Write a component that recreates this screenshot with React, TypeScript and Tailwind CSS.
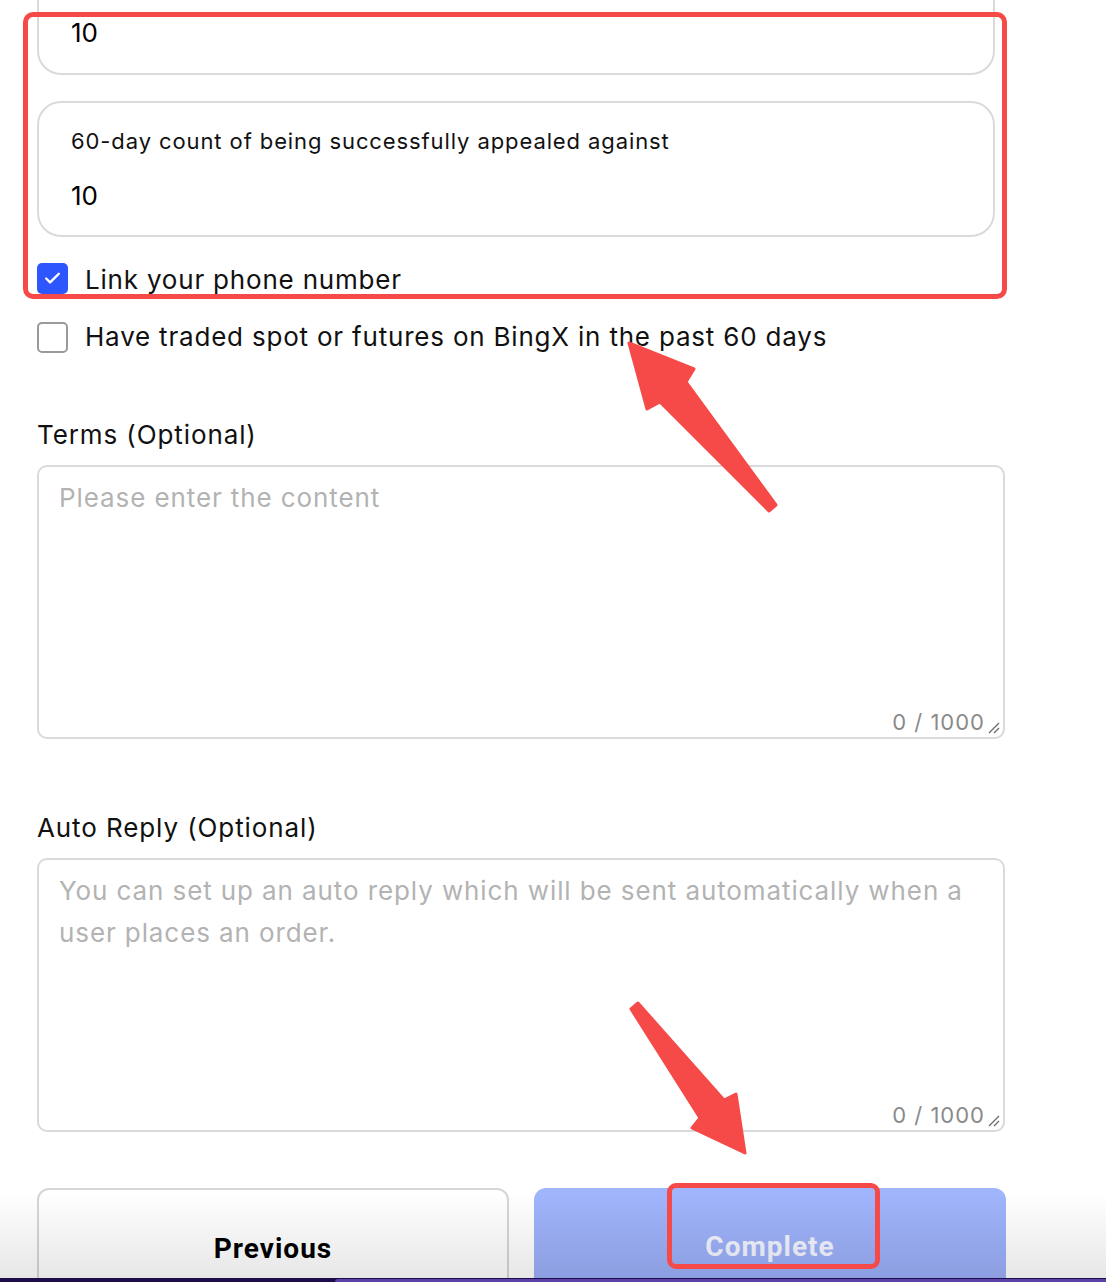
import React from 'react';
import { Check } from 'lucide-react';

const font = { fontFamily: 'Inter, "Noto Sans", sans-serif' };

const ResizeGrip = () => (
  <svg className="absolute right-[3px] bottom-[3px]" width="14" height="14" viewBox="0 0 14 14">
    <path d="M3 13 L13 3 M8 13 L13 8" stroke="#6b6b6b" strokeWidth="1.3" />
  </svg>
);

const CountBox = ({ label, value, className }: { label?: string; value: string; className?: string }) => (
  <div className={`w-[958px] h-[136px] rounded-[24px] border-2 border-[#dadada] px-[32px] flex flex-col ${className ?? ''}`}>
    {label && <p className="text-[22px] leading-[30px] text-[#111] mt-[23px] tracking-[0.9px]">{label}</p>}
    <p className={`text-[26px] leading-[36px] text-black ${label ? 'mt-[22px]' : 'mt-[74px]'}`}>{value}</p>
  </div>
);

const TextArea = ({ placeholder }: { placeholder: string }) => (
  <div className="relative w-[968px] h-[274px] rounded-[10px] border-2 border-[#dadada] px-[20px] pt-[10px]">
    <p className="text-[26px] leading-[42px] text-[#b3b3b3] tracking-[0.9px]">{placeholder}</p>
    <span className="absolute right-[18px] bottom-0 text-[22px] leading-[30px] text-[#8a8a8a] tracking-[1px]">0 / 1000</span>
    <ResizeGrip />
  </div>
);

const App: React.FC = () => {
  return (
    <div className="relative w-[1106px] h-[1282px] overflow-hidden bg-white" style={font}>
      <div className="pl-[37px] flex flex-col">
        <CountBox value="10" className="mt-[-61px]" />
        <CountBox label="60-day count of being successfully appealed against" value="10" className="mt-[26px]" />

        <div className="flex items-center gap-[17px] mt-[26px] h-[30px]">
          <div className="w-[31px] h-[31px] rounded-[5px] bg-[#2d56ff] flex items-center justify-center">
            <Check size={19} strokeWidth={3} color="white" />
          </div>
          <span className="text-[26px] leading-[36px] text-[#111] tracking-[0.8px] mt-[3px]">Link your phone number</span>
        </div>

        <div className="flex items-center gap-[17px] mt-[28px] h-[32px]">
          <div className="w-[31px] h-[31px] rounded-[5px] border-2 border-[#9a9a9a]" />
          <span className="text-[26px] leading-[36px] text-[#111] tracking-[0.8px]">Have traded spot or futures on BingX in the past 60 days</span>
        </div>

        <p className="text-[26px] leading-[36px] text-[#111] mt-[64px] tracking-[0.9px]">Terms (Optional)</p>
        <div className="mt-[12px]">
          <TextArea placeholder="Please enter the content" />
        </div>

        <p className="text-[26px] leading-[36px] text-[#111] mt-[71px] tracking-[0.9px]">Auto Reply (Optional)</p>
        <div className="mt-[12px]">
          <TextArea placeholder="You can set up an auto reply which will be sent automatically when a user places an order." />
        </div>

        <div className="flex gap-[25px] mt-[56px]">
          <button className="w-[472px] h-[130px] rounded-[12px] border-2 border-[#d6d6d6] bg-white flex justify-center pt-[41px]">
            <span className="text-[28px] leading-[36px] font-bold text-black tracking-[1px]" style={{ fontFamily: 'Roboto, Inter, sans-serif' }}>Previous</span>
          </button>
          <button className="w-[472px] h-[130px] rounded-[12px] bg-gradient-to-b from-[#a1b5fd] to-[#98acf5] flex justify-center pt-[41px]">
            <span className="text-[28px] leading-[36px] font-bold text-[#f2f4ff] tracking-[1px]" style={{ fontFamily: 'Roboto, Inter, sans-serif' }}>Complete</span>
          </button>
        </div>
      </div>

      {/* bottom fade */}
      <div className="absolute left-0 right-0 bottom-0 h-[90px] bg-gradient-to-b from-transparent to-black/10 pointer-events-none" />
      <div className="absolute left-0 right-0 bottom-0 h-[4px] bg-[#1d0d4d]">
        <div className="absolute left-[335px] right-0 top-[1px] bottom-0 rounded-tl-[6px] bg-[#5a42a6]" />
      </div>

      {/* annotations */}
      <div className="absolute left-[23px] top-[12px] w-[984px] h-[287px] rounded-[10px] border-[5px] border-[#f54a48] pointer-events-none" />
      <div className="absolute left-[667px] top-[1183px] w-[213px] h-[86px] rounded-[9px] border-[5px] border-[#f54a48] pointer-events-none" />
      <svg className="absolute left-0 top-0 pointer-events-none" width="1106" height="1282">
        <polygon
          points="629,343 694,369 686,382 776,505 769,511 660,402 647,409"
          fill="#f54a48"
          stroke="#f54a48"
          strokeWidth="3"
          strokeLinejoin="round"
        />
        <polygon
          points="631,1009 638,1003 724,1100 736,1094 745,1153 692,1128 700,1118"
          fill="#f54a48"
          stroke="#f54a48"
          strokeWidth="3"
          strokeLinejoin="round"
        />
      </svg>
    </div>
  );
};

export default App;
